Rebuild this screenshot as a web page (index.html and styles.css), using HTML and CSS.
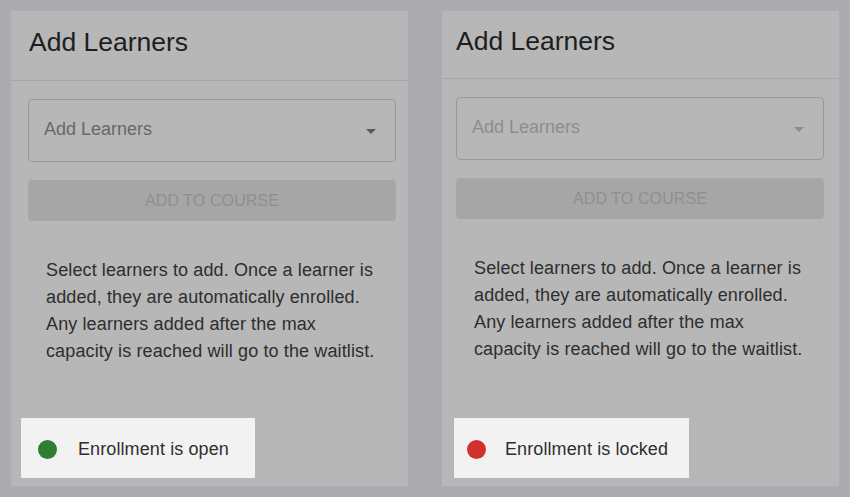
FILE: index.html
```html
<!DOCTYPE html>
<html lang="en">
<head>
<meta charset="utf-8">
<title>Add Learners</title>
<link rel="stylesheet" href="styles.css">
</head>
<body>
<div class="page">
  <section class="panel panel--a">
    <header class="panel-header"><h2 class="panel-title">Add Learners</h2></header>
    <div class="panel-body">
      <div class="select">
        <span class="select-label">Add Learners</span>
        <svg class="select-arrow" viewBox="0 0 24 24" width="24" height="24"><path d="M7 10l5 5 5-5z"/></svg>
      </div>
      <div class="btn">ADD TO COURSE</div>
      <p class="desc">Select learners to add. Once a learner is added, they are automatically enrolled. Any learners added after the max capacity is reached will go to the waitlist.</p>
    </div>
    <div class="status status--open">
      <span class="dot dot--green"></span>
      <span class="status-text">Enrollment is open</span>
    </div>
  </section>
  <section class="panel panel--b">
    <header class="panel-header"><h2 class="panel-title">Add Learners</h2></header>
    <div class="panel-body">
      <div class="select select--disabled">
        <span class="select-label">Add Learners</span>
        <svg class="select-arrow" viewBox="0 0 24 24" width="24" height="24"><path d="M7 10l5 5 5-5z"/></svg>
      </div>
      <div class="btn">ADD TO COURSE</div>
      <p class="desc">Select learners to add. Once a learner is added, they are automatically enrolled. Any learners added after the max capacity is reached will go to the waitlist.</p>
    </div>
    <div class="status status--locked">
      <span class="dot dot--red"></span>
      <span class="status-text">Enrollment is locked</span>
    </div>
  </section>
</div>
</body>
</html>
```

FILE: styles.css
```css
* { box-sizing: border-box; }
html, body {
  margin: 0;
  padding: 0;
  width: 850px;
  height: 497px;
  overflow: hidden;
  background: #acabb0;
  font-family: "Liberation Sans", Arial, sans-serif;
}
.page {
  display: flex;
  gap: 34px;
  padding: 11px;
  height: 497px;
}
.panel {
  width: 397px;
  height: 475px;
  background: #b7b7b7;
  display: flex;
  flex-direction: column;
}
.panel-header {
  padding: 16px 0 0 18px;
  height: 70px;
  border-bottom: 1px solid #a7a7a7;
}
.panel--b .panel-header {
  padding-top: 15px;
  padding-left: 14px;
  height: 68px;
}
.panel-title {
  margin: 0;
  font-size: 26.5px;
  line-height: 30px;
  font-weight: 400;
  color: #1e1e1e;
}
.panel-body {
  padding: 18px 12px 0 17px;
  display: flex;
  flex-direction: column;
}
.panel--b .panel-body {
  padding: 18px 15px 0 14px;
}
.select {
  height: 63px;
  border: 1px solid #9a9a9a;
  border-radius: 4px;
  display: flex;
  align-items: center;
  justify-content: space-between;
  padding: 0 12px 3px 15px;
}
.select-label {
  font-size: 18px;
  line-height: 20px;
  color: #686868;
}
.select-arrow { fill: #5a5a5a; margin-top: 3px; }
.select--disabled .select-label { color: #8d8d8d; }
.select--disabled .select-arrow { fill: #8d8d8d; }
.btn {
  margin-top: 18px;
  height: 41px;
  border-radius: 4px;
  background: #a6a6a6;
  color: #8f8f8f;
  font-size: 16px;
  letter-spacing: 0.1px;
  display: flex;
  align-items: center;
  justify-content: center;
}
.desc {
  margin: 36px 0 0;
  padding: 0 0 0 18px;
  width: 352px;
  font-size: 18px;
  letter-spacing: 0.12px;
  line-height: 27px;
  color: #2e2e2e;
}
.status {
  margin-top: auto;
  margin-bottom: 8px;
  height: 60px;
  padding-top: 2px;
  background: #f2f2f2;
  display: flex;
  align-items: center;
}
.status--open { margin-left: 10px; width: 234px; padding-left: 17px; }
.status--locked { margin-left: 12px; width: 235px; padding-left: 13px; }
.dot {
  width: 19px;
  height: 19px;
  border-radius: 50%;
  flex: none;
}
.dot--green { background: #2e7d32; }
.dot--red { background: #d32f2f; }
.status-text {
  font-size: 18px;
  letter-spacing: 0.1px;
  color: #2f2f2f;
}
.status--open .status-text { margin-left: 21px; }
.status--locked .status-text { margin-left: 19px; }
```
